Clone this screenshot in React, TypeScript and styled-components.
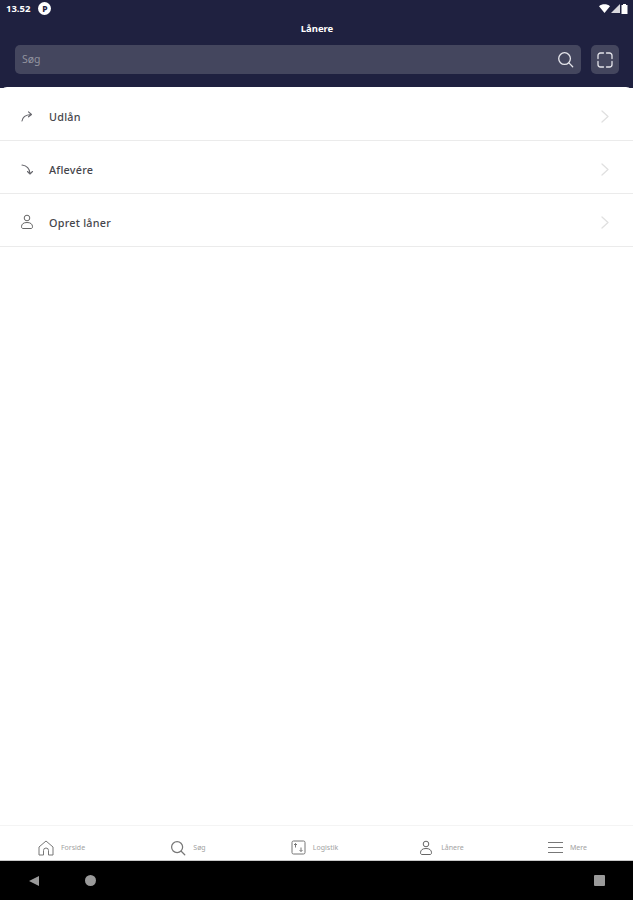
import React from "react"
import styled, { createGlobalStyle } from "styled-components"

const GlobalStyle = createGlobalStyle`
    html, body {
        margin: 0;
        padding: 0;
        background: #1f2140;
        font-family: "Noto Sans", "Open Sans", sans-serif;
    }
`
const Page = styled.div`
    width: 633px;
    height: 900px;
    display: flex;
    flex-direction: column;
    overflow: hidden;
    background: #fff;
`
const Header = styled.header`
    height: 88px;
    flex: none;
    background: #1f2140;
    display: flex;
    flex-direction: column;
`
const StatusBar = styled.div`
    height: 17px;
    padding: 0 5px 0 6px;
    display: flex;
    align-items: center;
    color: #fff;
    font-size: 9.5px;
    font-weight: 700;
`
const StatusBadge = styled.span`
    width: 13px;
    height: 13px;
    margin-left: 8px;
    border-radius: 50%;
    background: #fff;
    color: #1f2140;
    font-size: 8.5px;
    font-weight: 800;
    line-height: 13px;
    text-align: center;
`
const StatusIcons = styled.div`
    margin-left: auto;
    display: flex;
    align-items: center;
    gap: 1px;
`
const Title = styled.div`
    height: 24px;
    text-align: center;
    color: #fff;
    font-size: 9.5px;
    font-weight: 700;
    line-height: 24px;
    padding-left: 1px;
    margin-bottom: 1px;
`
const SearchRow = styled.div`
    display: flex;
    gap: 10px;
    padding: 3px 14px 0 15px;
`
const SearchBox = styled.div`
    flex: 1;
    height: 29px;
    padding: 0 7px 2px 7px;
    box-sizing: border-box;
    display: flex;
    align-items: center;
    justify-content: space-between;
    border-radius: 5px;
    background: #44465e;
    color: #92939f;
    font-size: 10.5px;
    svg {
        margin-top: 2px;
    }
`
const ScanButton = styled.div`
    width: 28px;
    height: 29px;
    display: flex;
    align-items: center;
    justify-content: center;
    border-radius: 5px;
    background: #44465e;
`
const Sheet = styled.main`
    flex: 1;
    margin-top: -1px;
    padding-top: 1px;
    background: #fff;
    border-radius: 7px 7px 0 0;
`
const Row = styled.div`
    height: 53px;
    box-sizing: border-box;
    padding: 4px 24px 0 19px;
    display: flex;
    align-items: center;
    border-bottom: 1px solid #ebebeb;
    color: #45454b;
    font-size: 10.8px;
    font-weight: 500;
    letter-spacing: 0.25px;
`
const RowIcon = styled.span`
    width: 16px;
    height: 16px;
    margin-right: 14px;
    display: flex;
`
const Chevron = styled.span`
    margin-left: auto;
    display: flex;
`
const TabBar = styled.nav`
    height: 36px;
    flex: none;
    box-sizing: border-box;
    padding: 9px 4px 0 0;
    border-top: 1px solid #f4f4f4;
    border-bottom: 1px solid #c9c9c9;
    display: grid;
    grid-template-columns: repeat(5, 126.5px);
    justify-content: center;
    background: #fff;
`
const Tab = styled.div`
    display: flex;
    align-items: center;
    justify-content: center;
    gap: 7px;
    color: #a2a2a2;
    font-size: 7px;
`
const SystemNav = styled.div`
    height: 39px;
    flex: none;
    box-sizing: border-box;
    padding: 0 28px 0 29px;
    background: #000;
    display: flex;
    align-items: center;
`
const NavBack = styled.span`
    width: 0;
    height: 0;
    border-top: 5.5px solid transparent;
    border-bottom: 5.5px solid transparent;
    border-right: 10px solid #9a9a9a;
`
const NavHome = styled.span`
    margin-left: 46px;
    width: 11px;
    height: 11px;
    border-radius: 50%;
    background: #9a9a9a;
`
const NavRecent = styled.span`
    margin-left: auto;
    width: 11px;
    height: 11px;
    border-radius: 1px;
    background: #9a9a9a;
`

const Wifi = () => (
    <svg width="11" height="9" viewBox="0 0 11 9"><path d="M0 2.2C3 -.4 8 -.4 11 2.2L5.5 9z" fill="#fff" /></svg>
)
const Signal = () => (
    <svg width="9" height="9" viewBox="0 0 9 9"><path d="M9 0v9H0z" fill="#d9d9de" /></svg>
)
const Battery = () => (
    <svg width="7" height="10" viewBox="0 0 7 10"><path d="M2 0h3v1h1.5v9H.5V1H2z" fill="#fff" /></svg>
)
const SearchGlyph = ({ size, color }: { size: number, color: string }) => (
    <svg width={size} height={size} viewBox="0 0 18 18" fill="none" stroke={color} strokeWidth="1.4" strokeLinecap="round">
        <circle cx="8" cy="8" r="6.2" />
        <path d="M12.6 12.6L16.6 16.6" />
    </svg>
)
const ScanGlyph = () => (
    <svg width="16" height="16" viewBox="0 0 16 16" fill="none" stroke="#e4e4ea" strokeWidth="1.3" strokeLinecap="round">
        <path d="M1 6.500V3.500A2.500 2.500 0 0 1 3.500 1H6.500M9.500 1h3A2.500 2.500 0 0 1 15 3.500V6.500M15 9.500v3A2.500 2.500 0 0 1 12.500 15H9.500M6.500 15H3.500A2.500 2.500 0 0 1 1 12.500V9.500" />
    </svg>
)
const LendGlyph = () => (
    <svg width="16" height="16" viewBox="0 0 16 16" fill="none" stroke="#66666c" strokeWidth="1.1" strokeLinecap="round" strokeLinejoin="round">
        <path d="M3 13C3.500 9 6 7 12 6.500M9.500 3.800L12.500 6.500L9.500 8.800" />
    </svg>
)
const ReturnGlyph = () => (
    <svg width="16" height="16" viewBox="0 0 16 16" fill="none" stroke="#66666c" strokeWidth="1.1" strokeLinecap="round" strokeLinejoin="round">
        <path d="M3 4C7.500 4.500 10.500 6.500 11 12.500M8.500 10.500L11 13L13.500 10.500" />
    </svg>
)
const PersonGlyph = () => (
    <svg width="16" height="16" viewBox="0 0 16 16" fill="none" stroke="#666" strokeWidth="1" strokeLinejoin="round">
        <circle cx="8" cy="4" r="2.800" />
        <path d="M8 8.500C4.500 8.500 2.500 10 2.500 12.800c0 1 .5 1.700 1.500 1.700h8c1 0 1.500-.7 1.500-1.700C13.500 10 11.500 8.500 8 8.500z" />
    </svg>
)
const ChevronGlyph = () => (
    <svg width="8" height="13" viewBox="0 0 8 13" fill="none" stroke="#e0e0e0" strokeWidth="1.3" strokeLinecap="round" strokeLinejoin="round">
        <path d="M1 1L7 6.500L1 12" />
    </svg>
)
const HomeGlyph = () => (
    <svg width="16" height="16" viewBox="0 0 16 16" fill="none" stroke="#777" strokeWidth="1" strokeLinejoin="round">
        <path d="M1 7L8 1L15 7V15H10.500V10.500A2.500 2.500 0 0 0 5.500 10.500V15H1z" />
    </svg>
)
const LogisticsGlyph = () => (
    <svg width="15" height="15" viewBox="0 0 15 15" fill="none" stroke="#777" strokeWidth="1">
        <rect x="1" y="1" width="13" height="13" rx="1.500" />
        <path d="M4.500 7.500V3.500M3 5L4.500 3.500L6 5M10 7.500V11.500M8.500 10L10 11.500L11.500 10" />
    </svg>
)
const MenuGlyph = () => (
    <svg width="15" height="13" viewBox="0 0 15 13" fill="none" stroke="#777" strokeWidth="1.100">
        <path d="M0 1.500H15M0 6.500H15M0 11.500H15" />
    </svg>
)

const rows = [
    { label: 'Udlån', icon: <LendGlyph /> },
    { label: 'Aflevére', icon: <ReturnGlyph /> },
    { label: 'Opret låner', icon: <PersonGlyph /> },
]
const tabs = [
    { label: 'Forside', icon: <HomeGlyph /> },
    { label: 'Søg', icon: <SearchGlyph size={16} color="#777" /> },
    { label: 'Logistik', icon: <LogisticsGlyph /> },
    { label: 'Lånere', icon: <PersonGlyph /> },
    { label: 'Mere', icon: <MenuGlyph /> },
]

export default function App() {
    return (
        <Page>
            <GlobalStyle />
            <Header>
                <StatusBar>
                    13.52
                    <StatusBadge>P</StatusBadge>
                    <StatusIcons><Wifi /><Signal /><Battery /></StatusIcons>
                </StatusBar>
                <Title>Lånere</Title>
                <SearchRow>
                    <SearchBox>Søg<SearchGlyph size={17} color="#e4e4ea" /></SearchBox>
                    <ScanButton><ScanGlyph /></ScanButton>
                </SearchRow>
            </Header>
            <Sheet>
                {rows.map(row =>
                    <Row key={row.label}>
                        <RowIcon>{row.icon}</RowIcon>
                        {row.label}
                        <Chevron><ChevronGlyph /></Chevron>
                    </Row>
                )}
            </Sheet>
            <TabBar>
                {tabs.map(tab =>
                    <Tab key={tab.label}>{tab.icon}{tab.label}</Tab>
                )}
            </TabBar>
            <SystemNav>
                <NavBack />
                <NavHome />
                <NavRecent />
            </SystemNav>
        </Page>
    )
}
